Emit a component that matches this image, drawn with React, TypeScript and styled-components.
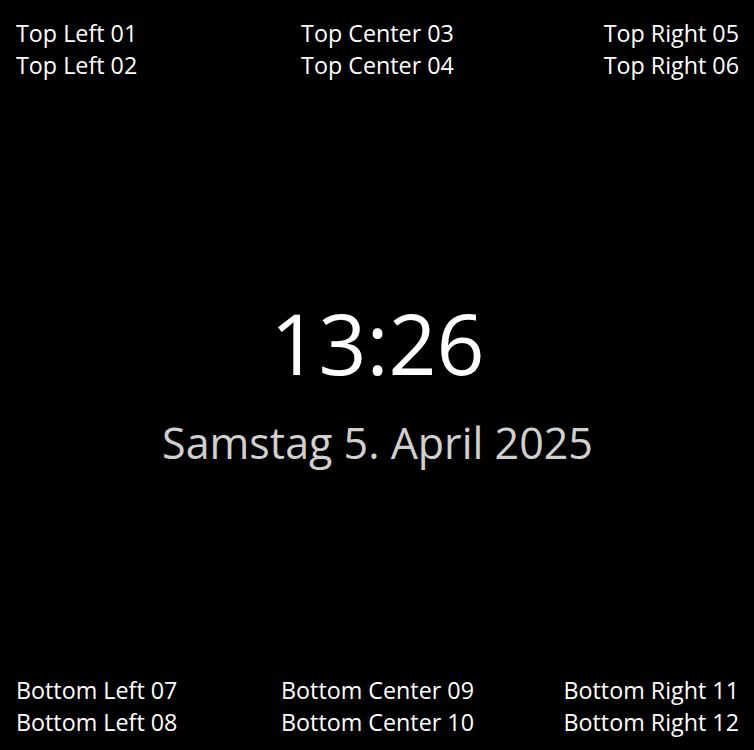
import { createGlobalStyle } from "styled-components";
import styled from "styled-components";

const GlobalStyle = createGlobalStyle`
  html, body {
    margin: 0;
    padding: 0;
    background: #000;
  }
  body {
    font-family: "Open Sans", "Noto Sans", sans-serif;
    color: #fff;
  }
`;

type Align = "left" | "center" | "right";

interface CornerProps {
  align: Align;
  lines: string[];
}

function Corner(props: CornerProps) {
  return <Block align={props.align}>
    {props.lines.map(line => (
      <Line key={line}>{line}</Line>
    ))}
  </Block>
}

export default function App() {
  return <>
    <GlobalStyle/>
    <Screen>
      <Row>
        <Corner align="left" lines={["Top Left 01", "Top Left 02"]}/>
        <Corner align="center" lines={["Top Center 03", "Top Center 04"]}/>
        <Corner align="right" lines={["Top Right 05", "Top Right 06"]}/>
      </Row>
      <Middle>
        <Clock>13:26</Clock>
        <DateText>Samstag 5. April 2025</DateText>
      </Middle>
      <Row>
        <Corner align="left" lines={["Bottom Left 07", "Bottom Left 08"]}/>
        <Corner align="center" lines={["Bottom Center 09", "Bottom Center 10"]}/>
        <Corner align="right" lines={["Bottom Right 11", "Bottom Right 12"]}/>
      </Row>
    </Screen>
  </>
}

const Screen = styled.div`
  display: flex;
  flex-direction: column;
  box-sizing: border-box;
  width: 754px;
  height: 750px;
  padding: 17px 15px 12px 16px;
  background: #000;
`;

const Row = styled.div`
  display: grid;
  grid-template-columns: 1fr auto 1fr;
  align-items: start;
`;

const Block = styled.div<{ align: Align }>`
  display: flex;
  flex-direction: column;
  align-items: ${p => p.align === "left" ? "flex-start" : p.align === "right" ? "flex-end" : "center"};
`;

const Line = styled.div`
  font-size: 23.3px;
  line-height: 32px;
  white-space: nowrap;
  color: #fff;
`;

const Middle = styled.div`
  flex: 1;
  display: flex;
  flex-direction: column;
  align-items: center;
  justify-content: center;
  padding-top: 8px;
`;

const Clock = styled.div`
  font-size: 84px;
  line-height: 100px;
  font-weight: 400;
  color: #fff;
`;

const DateText = styled.div`
  margin-top: 22px;
  font-size: 43px;
  line-height: 56px;
  color: #d0d0d0;
`;
